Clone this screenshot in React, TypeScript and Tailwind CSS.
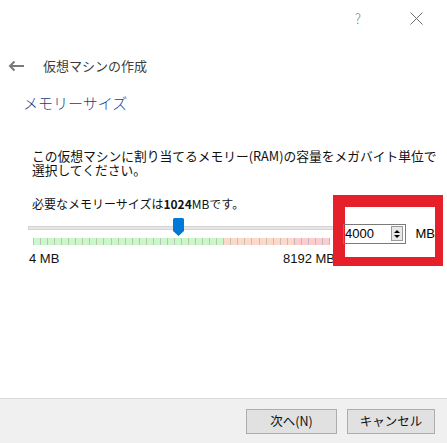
import { memo } from "react";

const TICKS = Array.from({ length: 43 });

const Slider = memo(function Slider() {
  return (
    <div className="relative w-[307px] h-[42px]">
      {/* track */}
      <div className="absolute left-0 right-0 top-[12px] h-[4px] bg-[#e6e6e6] border border-[#d4d4d4]" />
      {/* thumb */}
      <svg className="absolute left-[145px] top-[4px]" width="11" height="18" viewBox="0 0 11 18">
        <path d="M1.5 0 H9.5 A1.5 1.5 0 0 1 11 1.5 V13 L5.5 18 L0 13 V1.5 A1.5 1.5 0 0 1 1.5 0 Z" fill="#0078d7" />
      </svg>
      {/* tick strip */}
      <div className="absolute left-[5px] top-[24px] w-[297px] h-[7px] flex">
        <div className="w-[191px] bg-[#ccf7cc]" />
        <div className="w-[69px] bg-[#fcd9cb]" />
        <div className="flex-1 bg-[#fbcdd1]" />
        <div className="absolute inset-0 flex justify-between">
          {TICKS.map((_, i) => (
            <div key={i} className="w-px h-full bg-[#a9b3a9]/70" />
          ))}
        </div>
      </div>
    </div>
  );
});

export default function App() {
  return (
    <div
      className="w-[447px] h-[443px] bg-white flex flex-col text-black overflow-hidden relative"
      style={{ fontFamily: '"Noto Sans CJK JP", "Noto Sans", sans-serif' }}
    >
      {/* title bar */}
      <div className="h-[36px] flex items-center justify-end pr-[24px] gap-[49px] text-[#8a8a8a]">
        <span className="text-[14px] font-light">?</span>
        <svg width="13" height="13" viewBox="0 0 13 13" stroke="#6b6b6b" strokeWidth="1">
          <path d="M0.5 0.5 L12.5 12.5 M12.5 0.5 L0.5 12.5" />
        </svg>
      </div>

      {/* header */}
      <div className="h-[24px] mt-[18px] flex items-center pl-[8px] gap-[19px]">
        <svg width="16" height="12" viewBox="0 0 16 12" fill="none" stroke="#7a7a7a" strokeWidth="2">
          <path d="M16 6 H2 M6.5 1.5 L2 6 L6.5 10.5" />
        </svg>
        <span className="text-[13px] text-[#3c3c3c]">仮想マシンの作成</span>
      </div>

      {/* main heading */}
      <div className="pl-[23px] mt-[14px] text-[15px] font-light text-[#1a3c86] leading-[22px]">
        メモリーサイズ
      </div>

      <div className="pl-[32px] mt-[35px] text-[12.75px] leading-[14px] text-[#111] whitespace-nowrap">
        この仮想マシンに割り当てるメモリー(RAM)の容量をメガバイト単位で
        <br />
        選択してください。
      </div>

      <div className="pl-[32px] mt-[19px] text-[12px] leading-[16px] text-[#111]">
        必要なメモリーサイズは<span className="font-bold">1024</span>MBです。
      </div>

      {/* slider row */}
      <div className="pl-[28px] mt-[2px]">
        <Slider />
        <div
          className="w-[307px] flex justify-between text-[13px] leading-[14px] text-[#111] -mt-[4px]"
          style={{ fontFamily: '"Liberation Sans", sans-serif' }}
        >
          <span className="pl-[1px]">4 MB</span>
          <span>8192 MB</span>
        </div>
      </div>

      {/* highlighted memory input */}
      <div className="absolute left-[333px] top-[195px] w-[110px] h-[71px] border-t-[12px] border-l-[12px] border-r-[8px] border-b-[9px] border-[#e5202a] bg-white flex items-center pt-[3px]">
        <div className="w-[64px] h-[20px] border border-[#7a7a7a] flex items-center justify-between pl-[1px] pr-[2px] ml-[-2px]">
          <span className="text-[13px] leading-none" style={{ fontFamily: '"Liberation Sans", sans-serif' }}>4000</span>
          <div className="w-[12px] h-[15px] border border-[#9a9a9a] bg-[#e8e8e8] flex flex-col items-center justify-center gap-[2px]">
            <div className="w-0 h-0 border-l-[3px] border-r-[3px] border-b-[3px] border-l-transparent border-r-transparent border-b-black" />
            <div className="w-0 h-0 border-l-[3px] border-r-[3px] border-t-[3px] border-l-transparent border-r-transparent border-t-black" />
          </div>
        </div>
        <span className="ml-[10px] text-[13px]" style={{ fontFamily: '"Liberation Sans", sans-serif' }}>MB</span>
      </div>

      {/* footer */}
      <div className="mt-auto h-[45px] bg-[#f0f0f0] border-t border-[#dadada] flex items-center justify-end gap-[10px] pr-[12px]">
        <button className="w-[91px] h-[25px] bg-[#e1e1e1] border border-[#adadad] text-[12.5px] text-[#111]">
          次へ(N)
        </button>
        <button className="w-[88px] h-[25px] bg-[#e1e1e1] border border-[#adadad] text-[12.5px] text-[#111]">
          キャンセル
        </button>
      </div>
    </div>
  );
}
